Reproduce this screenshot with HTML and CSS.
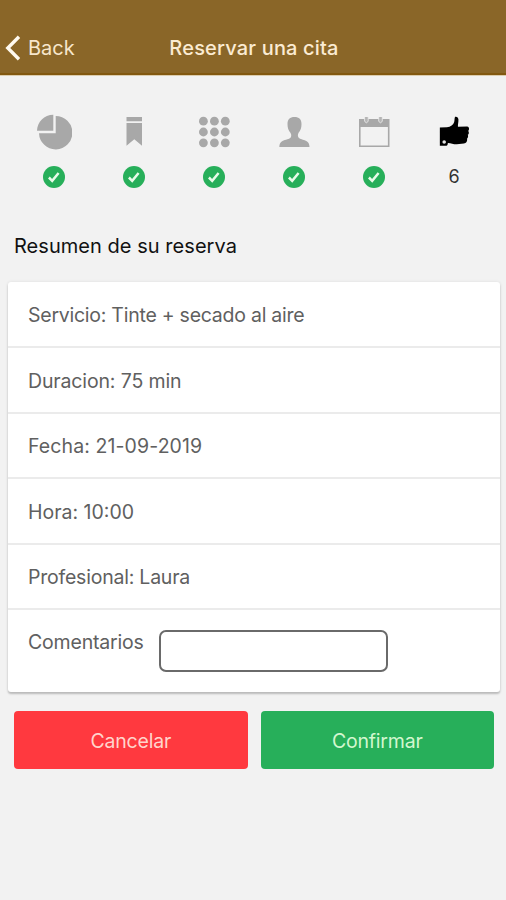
FILE: index.html
```html
<!DOCTYPE html>
<html lang="es">
<head>
<meta charset="utf-8">
<title>Reservar una cita</title>
<link rel="stylesheet" href="styles.css">
</head>
<body>
<header class="navbar">
  <a class="back"><svg width="16" height="26" viewBox="0 0 16 26"><path d="M14 1.800 2.800 13 14 24.200" fill="none" stroke="#fffaf0" stroke-width="3.4"/></svg><span>Back</span></a>
  <h1 class="title">Reservar una cita</h1>
</header>
<svg class="defs" width="0" height="0"><symbol id="check" viewBox="0 0 22 22"><circle cx="11" cy="11" r="11" fill="#27af5a"/><path d="m5.900 11.500 3.300 3.300 6.400-7.800" fill="none" stroke="#e9fbe9" stroke-width="2.500"/></symbol></svg>
<nav class="steps">
  <div class="step">
    <svg class="icon" viewBox="0 0 36 36"><path d="M17.300.8v16H1C1.200 7.800 8.200.9 17.300.8Z"/><path d="M19.700 2A16.700 16.700 0 1 1 3 19.300h16.700Z"/></svg>
    <svg class="check"><use href="#check"/></svg>
  </div>
  <div class="step">
    <svg class="icon" viewBox="0 0 36 36"><path d="M10.500 3h15.500v4.200H10.500ZM10.500 9h15.500v22.800l-7.700-6.500-7.800 6.500Z"/></svg>
    <svg class="check"><use href="#check"/></svg>
  </div>
  <div class="step">
    <svg class="icon" viewBox="0 0 36 36"><circle cx="7.400" cy="7.200" r="4.400"/><circle cx="18.400" cy="7.200" r="4.400"/><circle cx="29.300" cy="7.200" r="4.400"/><circle cx="7.400" cy="18" r="4.400"/><circle cx="18.400" cy="18" r="4.400"/><circle cx="29.300" cy="18" r="4.400"/><circle cx="7.400" cy="28.800" r="4.400"/><circle cx="18.400" cy="28.800" r="4.400"/><circle cx="29.300" cy="28.800" r="4.400"/></svg>
    <svg class="check"><use href="#check"/></svg>
  </div>
  <div class="step">
    <svg class="icon" viewBox="0 0 36 36"><path d="M18.500 3c4.600 0 7.100 2.600 7 7 0 3.800-1 6.400-2.900 8.800-.9 1.500-.9 3.200-.2 4.400 1.200 1.900 5.100 2.300 7.900 3.800 2.200 1.200 3.100 3 3.200 6H3.300c.1-3 1-4.800 3.200-6 2.800-1.500 7.200-1.900 8.300-3.800.7-1.200.6-2.900-.4-4.400-1.900-2.400-2.900-5-2.900-8.800-.1-4.400 2.400-7 7-7Z"/></svg>
    <svg class="check"><use href="#check"/></svg>
  </div>
  <div class="step">
    <svg class="icon" viewBox="0 0 36 36"><path d="M3 5h30.500v28H3Zm1.600 8v18.400h27.300V13Z" fill-rule="evenodd"/><path d="M8.600 3v4q1.800 3.600 3.600 0V3M22.700 3v4q1.800 3.600 3.600 0V3" fill="#b5b5b5" stroke="#eee" stroke-width=".8"/></svg>
    <svg class="check"><use href="#check"/></svg>
  </div>
  <div class="step current">
    <svg class="icon" viewBox="0 0 36 36"><path d="M3 14.300 10.500 14c4-.3 6.800-2.400 7.700-5.500.7-2.300.1-4.400 1-5.500 1.600-.8 3.400.7 3.500 2.900.1 3-.8 5.600-.5 7.500l9.800-.1c2.200.1 2.500 3.500 1.100 4.600 1 1.300.8 3.400-.5 4.200.6 1.400.4 3-.7 3.900.3 3.200-.8 5.200-3.400 5.200L21 32.100c-4 0-6.500-1.600-9.500-1.500-.1 2.300-.7 3-2.600 3L3 33.500Z"/><circle cx="7.600" cy="29.700" r="1.900" fill="#e4e4e4"/></svg>
    <span class="number">6</span>
  </div>
</nav>
<main>
  <h2 class="heading">Resumen de su reserva</h2>
  <section class="card">
    <div class="row service">Servicio: Tinte + secado al aire</div>
    <div class="row duration">Duracion: 75 min</div>
    <div class="row date">Fecha: 21-09-2019</div>
    <div class="row">Hora: 10:00</div>
    <div class="row professional">Profesional: Laura</div>
    <div class="row comments"><label for="comentarios">Comentarios</label><input id="comentarios" type="text"></div>
  </section>
  <div class="actions">
    <button class="cancel">Cancelar</button>
    <button class="confirm">Confirmar</button>
  </div>
</main>
</body>
</html>
```
FILE: styles.css
```css
* { box-sizing: border-box; }
body {
  margin: 0;
  min-height: 900px;
  background: #f2f2f2;
  color: #606060;
  font: 400 19.5px/24px Inter, "Liberation Sans", sans-serif;
}
.navbar {
  display: grid;
  grid-template-columns: 1fr auto 1fr;
  align-items: center;
  height: 75px;
  padding: 22px 0 0 5px;
  background: #8a6628;
  border-bottom: 2px solid #825810;
  box-shadow: 0 1px 0 #dccdaf;
}
.back { display: flex; align-items: center; gap: 7px; color: #f7e6cc; font-size: 20px; }
.title { margin: 0 3px 0 0; font-size: 20px; font-weight: 500; line-height: 24px; letter-spacing: .17px; color: #fbebd2; }
.defs { position: absolute; }
.steps { display: grid; grid-template-columns: repeat(6, 80px); padding: 39px 0 0 14px; }
.step { display: flex; flex-direction: column; align-items: center; height: 75px; }
.icon { width: 36px; height: 36px; fill: #a8a8a8; }
.check { width: 22px; height: 22px; margin-top: 16px; }
.current .icon { fill: #000; }
.number { margin-top: 16px; padding-top: 1px; font-size: 18px; color: #333; }
.heading { margin: 45px 0 0 14px; font-size: 20px; line-height: 24px; font-weight: 400; letter-spacing: .04px; color: #111; }
.card {
  margin: 24px 6px 0 8px;
  height: 410px;
  display: grid;
  grid-template-rows: 66px repeat(4, 65.5px) 1fr;
  background: #fff;
  border-radius: 3px;
  box-shadow: 0 2px 2px #bbb, 0 0 3px #ddd;
}
.row { display: flex; align-items: center; padding: 2px 20px 0; border-bottom: 2px solid #ebebeb; }
.service { letter-spacing: -.25px; }
.duration { letter-spacing: -.14px; }
.date { letter-spacing: .1px; }
.professional { letter-spacing: -.22px; }
.comments { align-items: flex-start; gap: 15px; padding-top: 20px; border: 0; letter-spacing: -.18px; }
input { width: 229px; height: 42px; padding: 0 8px; border: 2px solid #6a6a6a; border-radius: 7px; background: #fff; font: inherit; }
.actions { display: grid; grid-template-columns: 1fr 1fr; gap: 13px; padding: 19px 12px 0 14px; }
button { height: 58px; padding: 2px 0 0; border: 0; border-radius: 4px; font: inherit; letter-spacing: -.2px; }
.cancel { background: #ff393f; color: #ffd5cc; }
.confirm { background: #27af5a; color: #d3f7cf; }
```
